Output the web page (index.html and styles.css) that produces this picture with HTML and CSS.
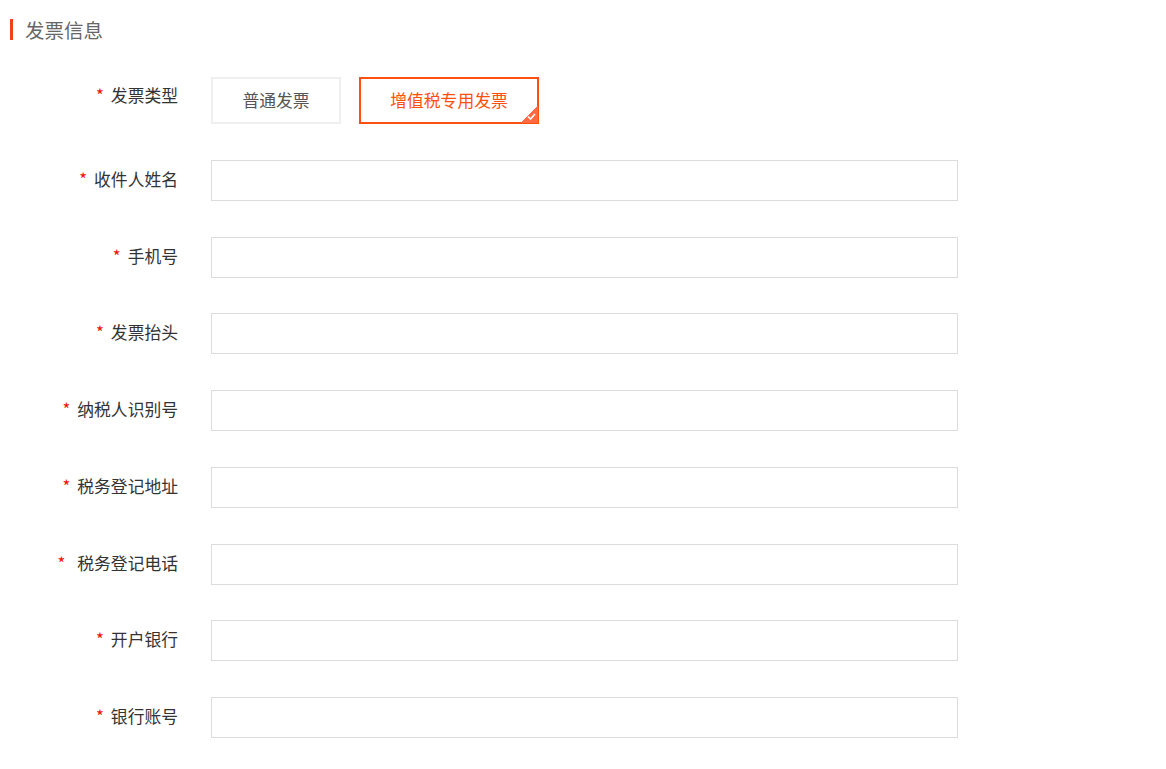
FILE: index.html
```html
<!DOCTYPE html>
<html lang="zh-CN">
<head>
<meta charset="utf-8">
<title>发票信息</title>
<link rel="stylesheet" href="styles.css">
</head>
<body>
<div class="page">
  <h2 class="section-title">发票信息</h2>
  <form class="form">
    <div class="label first"><span class="req">*</span>发票类型</div>
    <div class="types">
      <button type="button" class="type-btn">普通发票</button>
      <button type="button" class="type-btn active">增值税专用发票<span class="corner"><svg width="9" height="7" viewBox="0 0 9 7"><path d="M1 3.5 L3.5 6 L8 1" fill="none" stroke="#fff" stroke-width="1.6"/></svg></span></button>
    </div>

    <div class="label"><span class="req">*</span>收件人姓名</div>
    <input class="field" type="text">

    <div class="label"><span class="req">*</span>手机号</div>
    <input class="field" type="text">

    <div class="label"><span class="req">*</span>发票抬头</div>
    <input class="field" type="text">

    <div class="label"><span class="req">*</span>纳税人识别号</div>
    <input class="field" type="text">

    <div class="label"><span class="req">*</span>税务登记地址</div>
    <input class="field" type="text">

    <div class="label"><span class="req wide">*</span>税务登记电话</div>
    <input class="field" type="text">

    <div class="label"><span class="req">*</span>开户银行</div>
    <input class="field" type="text">

    <div class="label"><span class="req">*</span>银行账号</div>
    <input class="field" type="text">
  </form>
</div>
</body>
</html>
```
FILE: styles.css
```css
* { box-sizing: border-box; }
html, body {
  margin: 0;
  padding: 0;
  background: #fff;
}
body {
  font-family: "Microsoft YaHei", "Noto Sans CJK SC", "Noto Sans", sans-serif;
  color: #333;
}
.page {
  padding: 19px 0 0 10px;
}
.section-title {
  margin: 0;
  border-left: 3px solid #f2401a;
  padding-left: 12px;
  height: 21px;
  line-height: 21px;
  font-size: 19.5px;
  font-weight: normal;
  color: #666;
}
.form {
  display: grid;
  grid-template-columns: 168px 747px;
  column-gap: 33px;
  row-gap: 35.75px;
  margin-top: 37px;
}
.label {
  text-align: right;
  font-size: 16.8px;
  line-height: 38px;
  color: #333;
  white-space: nowrap;
}
.label.first {
  line-height: 37px;
}
.req {
  color: #f0140a;
  margin-right: 7px;
}
.req.wide {
  margin-right: 12px;
}
.types {
  display: flex;
  gap: 18px;
  height: 47px;
}
.type-btn {
  position: relative;
  width: 130px;
  height: 47px;
  border: 2px solid #efefef;
  background: #fff;
  font-family: inherit;
  font-size: 16.8px;
  color: #555;
  padding: 0 0 1px;
  cursor: pointer;
}
.type-btn.active {
  width: 180px;
  border-color: #ff4f0f;
  color: #ff4f0f;
}
.corner {
  position: absolute;
  right: -1px;
  bottom: -1px;
  width: 17px;
  height: 17px;
  background: linear-gradient(135deg, transparent 50%, #ff6a45 50%);
  display: flex;
  align-items: flex-end;
  justify-content: flex-end;
  padding: 0 2px 3px 0;
}
.corner svg { display: block; }
.field {
  width: 747px;
  height: 41px;
  border: 1px solid #dcdcdc;
  background: #fff;
  outline: none;
  font-family: inherit;
  font-size: 14px;
  padding: 0 10px;
}
```
